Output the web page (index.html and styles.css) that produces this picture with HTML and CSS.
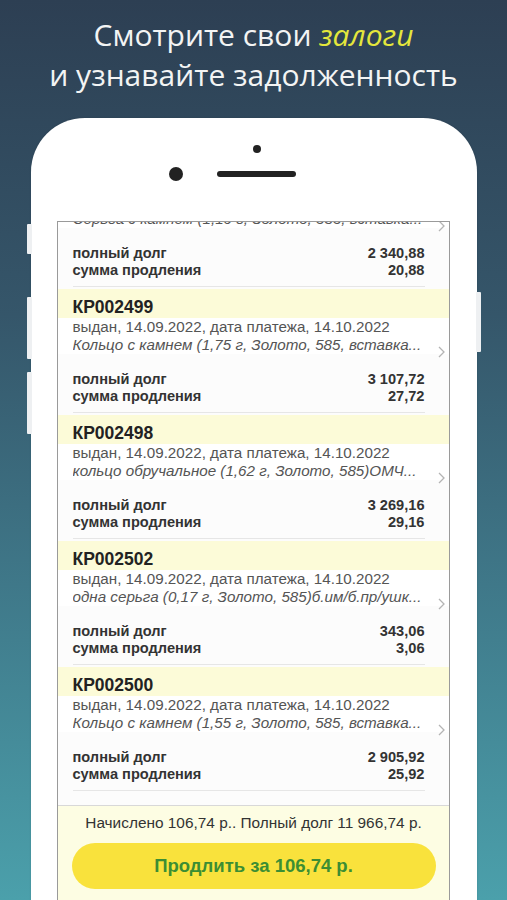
FILE: index.html
```html
<!DOCTYPE html>
<html lang="ru">
<head>
    <meta charset="UTF-8">
    <title>Залоги</title>
    <link rel="stylesheet" href="styles.css">
</head>
<body>
<div class="page">
    <h1 class="title">
        <span class="title-line">Смотрите свои <em>залоги</em></span>
        <span class="title-line">и узнавайте задолженность</span>
    </h1>

    <div class="phone">
        <span class="side-btn mute"></span>
        <span class="side-btn vol-up"></span>
        <span class="side-btn vol-down"></span>
        <span class="side-btn power"></span>

        <div class="phone-top">
            <div class="sensor"></div>
            <div class="speaker-row">
                <div class="camera"></div>
                <div class="speaker"></div>
                <div class="spacer"></div>
            </div>
        </div>

        <div class="screen">
            <div class="list">
                <ul class="cards">
                    <li class="card card-partial">
                        <div class="card-info">
                            <div class="card-text">
                                <p class="item">Серьга с камнем (1,10 г, Золото, 585, вставка...</p>
                            </div>
                            <svg class="chevron" width="7" height="12" viewBox="0 0 7 12"><polyline points="1,1 6,6 1,11" fill="none" stroke="#b4b4b4" stroke-width="1.3"/></svg>
                        </div>
                        <div class="card-sum">
                            <div class="sum-row"><span>полный долг</span><span>2 340,88</span></div>
                            <div class="sum-row"><span>сумма продления</span><span>20,88</span></div>
                        </div>
                    </li>
                    <li class="card">
                        <div class="card-head">КР002499</div>
                        <div class="card-info">
                            <div class="card-text">
                                <p class="issued">выдан, 14.09.2022, дата платежа, 14.10.2022</p>
                                <p class="item">Кольцо с камнем (1,75 г, Золото, 585, вставка...</p>
                            </div>
                            <svg class="chevron" width="7" height="12" viewBox="0 0 7 12"><polyline points="1,1 6,6 1,11" fill="none" stroke="#b4b4b4" stroke-width="1.3"/></svg>
                        </div>
                        <div class="card-sum">
                            <div class="sum-row"><span>полный долг</span><span>3 107,72</span></div>
                            <div class="sum-row"><span>сумма продления</span><span>27,72</span></div>
                        </div>
                    </li>
                    <li class="card">
                        <div class="card-head">КР002498</div>
                        <div class="card-info">
                            <div class="card-text">
                                <p class="issued">выдан, 14.09.2022, дата платежа, 14.10.2022</p>
                                <p class="item">кольцо обручальное (1,62 г, Золото, 585)ОМЧ...</p>
                            </div>
                            <svg class="chevron" width="7" height="12" viewBox="0 0 7 12"><polyline points="1,1 6,6 1,11" fill="none" stroke="#b4b4b4" stroke-width="1.3"/></svg>
                        </div>
                        <div class="card-sum">
                            <div class="sum-row"><span>полный долг</span><span>3 269,16</span></div>
                            <div class="sum-row"><span>сумма продления</span><span>29,16</span></div>
                        </div>
                    </li>
                    <li class="card">
                        <div class="card-head">КР002502</div>
                        <div class="card-info">
                            <div class="card-text">
                                <p class="issued">выдан, 14.09.2022, дата платежа, 14.10.2022</p>
                                <p class="item">одна серьга (0,17 г, Золото, 585)б.им/б.пр/ушк...</p>
                            </div>
                            <svg class="chevron" width="7" height="12" viewBox="0 0 7 12"><polyline points="1,1 6,6 1,11" fill="none" stroke="#b4b4b4" stroke-width="1.3"/></svg>
                        </div>
                        <div class="card-sum">
                            <div class="sum-row"><span>полный долг</span><span>343,06</span></div>
                            <div class="sum-row"><span>сумма продления</span><span>3,06</span></div>
                        </div>
                    </li>
                    <li class="card">
                        <div class="card-head">КР002500</div>
                        <div class="card-info">
                            <div class="card-text">
                                <p class="issued">выдан, 14.09.2022, дата платежа, 14.10.2022</p>
                                <p class="item">Кольцо с камнем (1,55 г, Золото, 585, вставка...</p>
                            </div>
                            <svg class="chevron" width="7" height="12" viewBox="0 0 7 12"><polyline points="1,1 6,6 1,11" fill="none" stroke="#b4b4b4" stroke-width="1.3"/></svg>
                        </div>
                        <div class="card-sum">
                            <div class="sum-row"><span>полный долг</span><span>2 905,92</span></div>
                            <div class="sum-row"><span>сумма продления</span><span>25,92</span></div>
                        </div>
                    </li>
                </ul>
            </div>
            <div class="footer">
                <p class="total">Начислено 106,74 р.. Полный долг 11 966,74 р.</p>
                <button class="extend-btn">Продлить за 106,74 р.</button>
            </div>
        </div>
    </div>
</div>
</body>
</html>
```

FILE: styles.css
```css
*{
    margin: 0;
    padding: 0;
    box-sizing: border-box;
}
html, body{
    height: 100%;
}
body{
    overflow: hidden;
    background: linear-gradient(180deg, #2d3f53 0%, #35566a 35%, #3f7889 65%, #4ba0ab 100%);
    font-family: "Liberation Sans", Arial, sans-serif;
}
ul{
    list-style-type: none;
}
.page{
    height: 900px;
    display: flex;
    flex-direction: column;
    align-items: center;
}
.title{
    padding-top: 15px;
    font-family: "Open Sans", sans-serif;
    font-weight: 400;
    font-size: 30px;
    line-height: 40px;
    color: #f3f4f4;
    text-align: center;
}
.title-line{
    display: block;
    white-space: nowrap;
}
.title em{
    color: #e4e73c;
}

/* телефон */
.phone{
    position: relative;
    width: 446px;
    height: 900px;
    margin-top: 23px;
    flex-shrink: 0;
    background-color: #ffffff;
    border-radius: 54px 54px 0 0;
    box-shadow: 0 0 2px rgba(0, 0, 0, 0.15);
}
.side-btn{
    position: absolute;
    width: 5px;
    background-color: #eef0f2;
    border-radius: 1px;
}
.mute{ left: -4px; top: 106px; height: 30px; }
.vol-up{ left: -4px; top: 179px; height: 62px; }
.vol-down{ left: -4px; top: 254px; height: 62px; }
.power{ right: -4px; top: 174px; height: 60px; }

.phone-top{
    height: 103px;
    padding-top: 27px;
    display: flex;
    flex-direction: column;
    align-items: center;
}
.sensor{
    width: 8px;
    height: 8px;
    margin-left: 6px;
    border-radius: 50%;
    background-color: #222;
}
.speaker-row{
    display: flex;
    align-items: center;
    gap: 34px;
    margin-top: 14px;
    padding-left: 5px;
}
.camera, .spacer{
    width: 14px;
    height: 14px;
    border-radius: 50%;
}
.camera{
    background-color: #222;
}
.speaker{
    width: 79px;
    height: 6px;
    border-radius: 3px;
    background-color: #222;
}

/* экран */
.screen{
    margin: 0 27px 0 26px;
    height: 700px;
    border: 1px solid #9a9a9a;
    border-bottom: none;
    background-color: #fcfcfc;
    color: #333;
}
.list{
    height: 583px;
    overflow: hidden;
}
.cards{
    margin-top: -12px;
}
.card{
    height: 126px;
}
.card-partial{
    height: 79px;
}
.card-head{
    height: 29px;
    padding: 8px 15px 0;
    background-color: #fcfbd8;
    font-size: 17.5px;
    font-weight: bold;
    line-height: 20px;
    color: #222;
}
.card-info{
    display: flex;
    align-items: flex-end;
    padding: 0 4px 0 15px;
    background-color: #fff;
}
.card-text{
    flex: 1;
    font-size: 15.2px;
    line-height: 18px;
    color: #555;
    white-space: nowrap;
    overflow: hidden;
}
.item{
    font-style: italic;
}
.chevron{
    margin-bottom: -4px;
}
.card-sum{
    margin: 17px 24px 0 15px;
    padding-bottom: 7px;
    border-bottom: 1px solid #e6e6e6;
}
.sum-row{
    display: flex;
    justify-content: space-between;
    font-size: 14.6px;
    font-weight: bold;
    line-height: 17px;
    color: #333;
}

/* итог */
.footer{
    border-top: 1px solid #d8d8d8;
    background-color: #fdfde3;
    padding: 8px 13px 0 14px;
    height: 200px;
}
.total{
    font-size: 15.4px;
    line-height: 18px;
    text-align: center;
    color: #333;
}
.extend-btn{
    display: block;
    width: 100%;
    height: 46px;
    margin-top: 11px;
    border: none;
    border-radius: 23px;
    background-color: #f9e23c;
    font-family: "Liberation Sans", Arial, sans-serif;
    font-size: 18.5px;
    font-weight: bold;
    color: #3c8e33;
}
```
